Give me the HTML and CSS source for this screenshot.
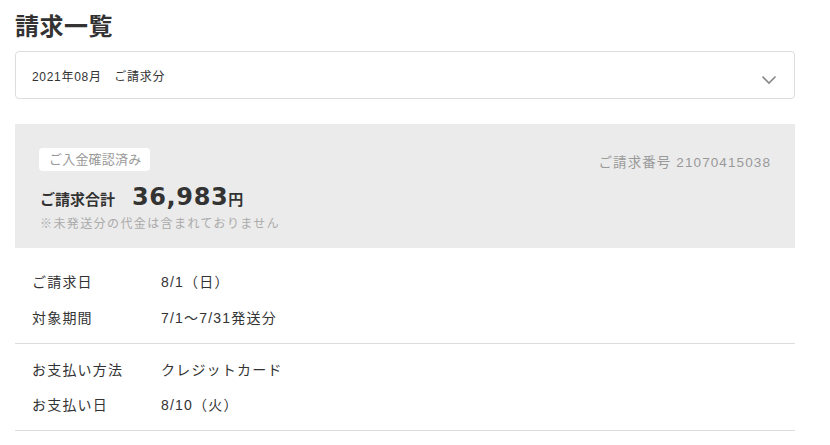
FILE: index.html
```html
<!DOCTYPE html>
<html lang="ja">
<head>
    <meta charset="UTF-8">
    <meta name="viewport" content="width=device-width, initial-scale=1.0">
    <title>請求一覧</title>
    <link rel="stylesheet" href="styles.css">
</head>
<body>
    <div class="page">
        <h1>請求一覧</h1>

        <div class="select">
            <span>2021年08月　ご請求分</span>
            <svg class="chevron" width="16" height="10" viewBox="0 0 16 10">
                <path d="M1.5 1.5 L8 8 L14.5 1.5" fill="none" stroke="#888" stroke-width="1.6"/>
            </svg>
        </div>

        <div class="summary">
            <div class="summary-top">
                <span class="badge">ご入金確認済み</span>
                <span class="invoice-no">ご請求番号 21070415038</span>
            </div>
            <div class="total">
                <span class="total-label">ご請求合計</span>
                <span class="total-amount">36,983</span><span class="yen">円</span>
            </div>
            <div class="note">※未発送分の代金は含まれておりません</div>
        </div>

        <div class="section first">
            <div class="row"><span class="label">ご請求日</span><span class="value">8/1（日）</span></div>
            <div class="row"><span class="label">対象期間</span><span class="value">7/1〜7/31発送分</span></div>
        </div>
        <div class="section second">
            <div class="row"><span class="label">お支払い方法</span><span class="value">クレジットカード</span></div>
            <div class="row"><span class="label">お支払い日</span><span class="value">8/10（火）</span></div>
        </div>
    </div>
</body>
</html>
```

FILE: styles.css
```css
body {
    margin: 0;
    padding: 0;
    background-color: #ffffff;
    color: #333333;
    font-family: "Liberation Sans", "Noto Sans CJK JP", sans-serif;
}

.page {
    width: 780px;
    padding: 0 15px;
}

h1 {
    font-size: 24px;
    line-height: 34px;
    font-weight: bold;
    letter-spacing: 0.5px;
    margin: 10px 0 7px;
    color: #333333;
}

.select {
    height: 46px;
    border: 1px solid #dddddd;
    border-radius: 4px;
    padding: 0 17px 0 16px;
    display: flex;
    align-items: center;
    justify-content: space-between;
    font-size: 12px;
    letter-spacing: 0.7px;
}

.chevron {
    margin-top: 9px;
}

.summary {
    margin-top: 25px;
    background-color: #ebebeb;
    padding: 24px 25px 15px 24px;
}

.summary-top {
    display: flex;
    justify-content: space-between;
    align-items: center;
}

.badge {
    background-color: #ffffff;
    color: #999999;
    font-size: 13px;
    line-height: 23px;
    padding: 0 9px 0 10px;
    border-radius: 4px;
    letter-spacing: 0.2px;
}

.invoice-no {
    color: #999999;
    font-size: 13.5px;
    letter-spacing: 1.1px;
    margin-right: -1px;
    padding-top: 2px;
}

.total {
    margin-top: 11px;
    height: 30px;
    display: flex;
    align-items: baseline;
    padding-left: 1px;
}

.total-label {
    font-size: 15px;
    font-weight: bold;
    margin-right: 17px;
}

.total-amount {
    font-family: "DejaVu Sans", sans-serif;
    font-size: 24px;
    font-weight: bold;
    line-height: 30px;
    letter-spacing: 0.6px;
}

.yen {
    font-size: 15px;
    font-weight: bold;
}

.note {
    font-size: 12px;
    line-height: 18px;
    color: #aaaaaa;
    letter-spacing: 1.4px;
    padding: 3px 0 0 1px;
}

.section {
    border-bottom: 1px solid #dddddd;
}

.section.first {
    margin-top: 7px;
    padding: 8px 0;
}

.section.second {
    padding: 7px 0 9px;
}

.row {
    display: flex;
    height: 36px;
    align-items: center;
    font-size: 14px;
    letter-spacing: 1.2px;
    padding-left: 17px;
}

.section.second .row {
    height: 35px;
}

.label {
    width: 129px;
}
```
